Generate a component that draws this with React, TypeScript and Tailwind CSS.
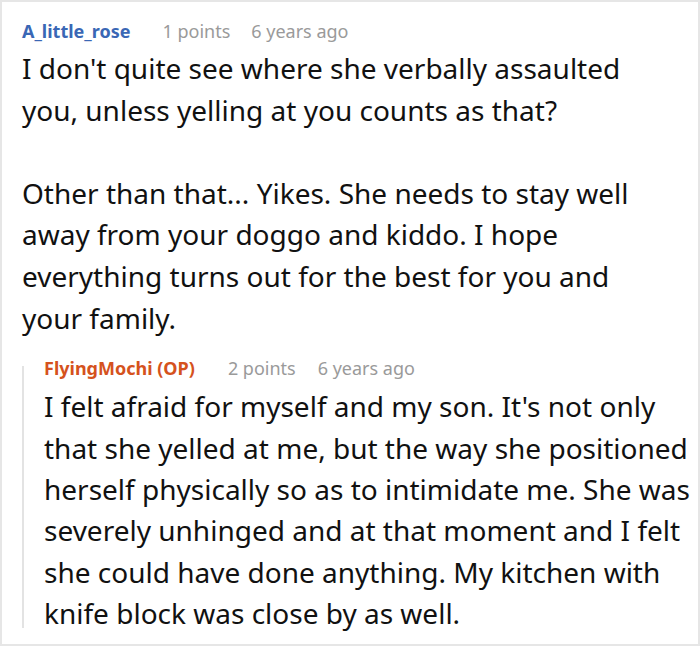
export default function App() {
  return (
    <div
      className="w-[700px] h-[646px] border-2 border-[#e6e6e6] bg-white overflow-hidden"
      style={{ fontFamily: '"Noto Sans", "Open Sans", sans-serif' }}
    >
      <div className="pl-[20px] pr-[8px] pt-[17px]">
        <div className="flex items-center h-6 text-[18px] leading-6">
          <span className="font-bold text-[#3a67b5]">A_little_rose</span>
          <span className="ml-[32px] text-[#9a9a9a]">1 points</span>
          <span className="ml-[21px] text-[#9a9a9a]">6 years ago</span>
        </div>
        <div className="mt-[5px] max-w-[630px] text-[28px] leading-[41.6px] text-[#111]">
          <p>I don't quite see where she verbally assaulted you, unless yelling at you counts as that?</p>
          <p className="mt-[41.6px]">
            Other than that... Yikes. She needs to stay well away from your doggo and kiddo. I hope everything turns out for the best for you and your family.
          </p>
        </div>

        <div className="relative mt-[17px] pl-[22px]">
          <span className="absolute left-0 top-[10px] bottom-[7px] w-[2px] bg-[#e3e3e3]" />
          <div className="flex items-center h-6 text-[18px] leading-6">
            <span className="font-bold text-[#d5521d]">FlyingMochi (OP)</span>
            <span className="ml-[33px] text-[#9a9a9a]">2 points</span>
            <span className="ml-[22px] text-[#9a9a9a]">6 years ago</span>
          </div>
          <div className="mt-[6px] text-[28px] leading-[41.4px] text-[#111]">
            <p>
              I felt afraid for myself and my son. It's not only that she yelled at me, but the way she positioned herself physically so as to intimidate me. She was severely unhinged and at that moment and I felt she could have done anything. My kitchen with knife block was close by as well.
            </p>
          </div>
        </div>
      </div>
    </div>
  )
}
